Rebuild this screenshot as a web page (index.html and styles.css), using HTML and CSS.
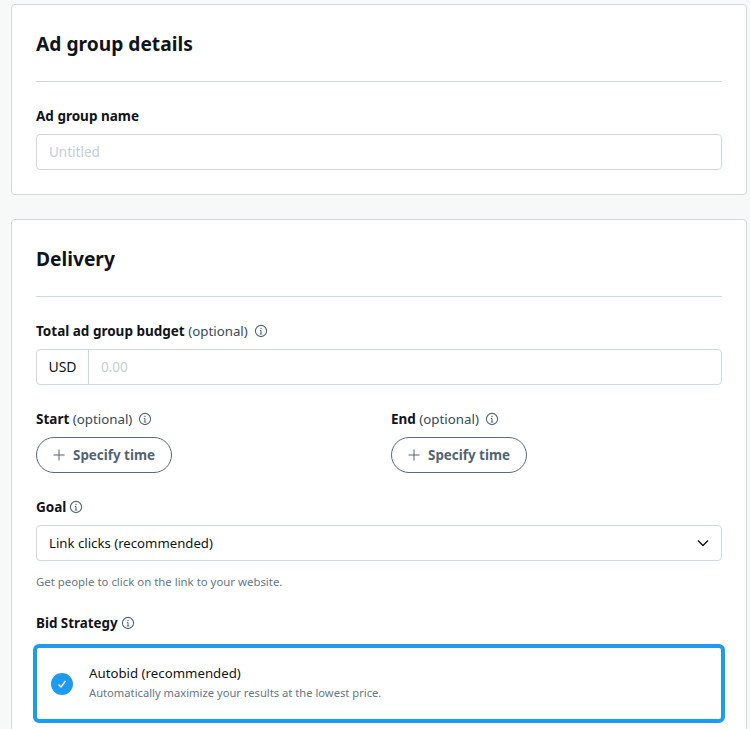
FILE: index.html
```html
<!DOCTYPE html>
<html lang="en">
<head>
<meta charset="utf-8">
<title>Ad group</title>
<link rel="stylesheet" href="styles.css">
</head>
<body>
<main class="page">
  <section class="card card-details">
    <h2 class="card-title">Ad group details</h2>
    <div class="label label-name"><b>Ad group name</b></div>
    <div class="input"><span class="placeholder">Untitled</span></div>
  </section>
  <section class="card card-delivery">
    <h2 class="card-title">Delivery</h2>
    <div class="label label-budget"><span><b>Total ad group budget</b> (optional)</span>
      <svg class="info info-wide" viewBox="0 0 14 14"><use href="#i"/></svg>
    </div>
    <div class="input input-group"><span class="addon">USD</span><span class="placeholder group-value">0.00</span></div>
    <div class="dates">
      <div class="date">
        <div class="label"><span><b>Start</b> (optional)</span>
          <svg class="info info-wide" viewBox="0 0 14 14"><use href="#i"/></svg>
        </div>
        <button class="pill" type="button"><svg class="plus" viewBox="0 0 12 12"><path d="M6 .5v11M.5 6h11"/></svg><span>Specify time</span></button>
      </div>
      <div class="date">
        <div class="label"><span><b>End</b> (optional)</span>
          <svg class="info info-wide" viewBox="0 0 14 14"><use href="#i"/></svg>
        </div>
        <button class="pill" type="button"><svg class="plus" viewBox="0 0 12 12"><path d="M6 .5v11M.5 6h11"/></svg><span>Specify time</span></button>
      </div>
    </div>
    <div class="label label-goal"><b>Goal</b>
      <svg class="info" viewBox="0 0 14 14"><use href="#i"/></svg>
    </div>
    <div class="input select"><span class="select-value">Link clicks (recommended)</span>
      <svg class="chevron" viewBox="0 0 12 8"><path d="M1 1.5l5 5 5-5"/></svg>
    </div>
    <p class="help">Get people to click on the link to your website.</p>
    <div class="label label-bid"><b>Bid Strategy</b>
      <svg class="info" viewBox="0 0 14 14"><use href="#i"/></svg>
    </div>
    <div class="option">
      <span class="check"><svg viewBox="0 0 12 12"><path d="M2.5 6.5l2.5 2.5 4.5-6"/></svg></span>
      <div class="option-text">
        <div class="option-title">Autobid (recommended)</div>
        <div class="option-sub">Automatically maximize your results at the lowest price.</div>
      </div>
    </div>
  </section>
</main>
<svg class="defs" width="0" height="0"><defs><g id="i" fill="none" stroke="#536471"><circle cx="7" cy="7" r="5.6" stroke-width="1.1"/><path d="M7 6.3v3.6M5.9 6.4H7M5.8 10h2.4" stroke-width="1"/><path d="M7 3.8v1.2" stroke-width="1.2"/></g></defs></svg>
</body>
</html>
```
FILE: styles.css
```css
* { box-sizing: border-box; }
html, body { margin: 0; height: 729px; overflow: hidden; }
body {
  background: #f7f9f9;
  color: #0f1419;
  font-family: "Noto Sans", "Open Sans", sans-serif;
  font-size: 14px;
}
.page { padding: 4px 3px 0 11px; display: flex; flex-direction: column; gap: 24px; }
.card {
  background: #fff;
  border: 1px solid #cfd9de;
  border-radius: 4px;
  padding: 0 24px;
}
.card-details { height: 191px; }
.card-delivery { height: 600px; }
.card-title {
  margin: 0;
  height: 77px;
  padding-top: 24px;
  font-size: 19.2px;
  line-height: 30px;
  font-weight: 700;
  border-bottom: 1px solid #cfd9de;
}
.label {
  display: flex;
  align-items: center;
  height: 20px;
  font-size: 13.3px;
  line-height: 20px;
  color: #394956;
}
.label b { color: #0f1419; font-weight: 700; font-size: 13.5px; }
.label-name, .label-budget { margin-top: 24px; margin-bottom: 8px; }
.input {
  height: 36px;
  border: 1px solid #cfd9de;
  border-radius: 4px;
  padding: 0 12px 1px;
  display: flex;
  align-items: center;
  background: #fff;
  font-size: 13.5px;
}
.placeholder { color: #c3ced6; }
.input-group { padding: 0; }
.addon { width: 52px; height: 100%; border-right: 1px solid #cfd9de; display: flex; align-items: center; justify-content: center; color: #0f1419; font-size: 14px; padding-bottom: 1px; }
.group-value { padding: 0 0 1px 12px; }
.dates { display: grid; grid-template-columns: 355px 1fr; margin-top: 24px; }
.date .label { margin-bottom: 8px; }
.pill {
  height: 36px;
  width: 136px;
  border: 1px solid #5b6b78;
  border-radius: 18px;
  background: #fff;
  color: #536471;
  font: 700 13.4px "Noto Sans", "Open Sans", sans-serif;
  display: flex;
  align-items: center;
  justify-content: center;
  gap: 8px;
  padding: 0;
}
.plus { width: 12px; height: 12px; fill: none; stroke: #536471; stroke-width: 1; }
.info { width: 14px; height: 14px; margin-left: 3px; flex: none; }
.info-wide { margin-left: 6px; }
.label-goal { margin-top: 24px; margin-bottom: 8px; }
.select { justify-content: space-between; color: #0f1419; padding-bottom: 0; }
.select-value { font-size: 13.2px; padding-bottom: 1px; }
.chevron { width: 12px; height: 8px; fill: none; stroke: #0f1419; stroke-width: 1.4; }
.help { margin: 12px 0 0; font-size: 11.4px; line-height: 18px; color: #657786; }
.label-bid { margin-top: 22px; margin-bottom: 11px; }
.label-bid b { font-size: 13.4px; }
.option {
  margin: 0 -3px;
  height: 79px;
  border: 4px solid #1d9bf0;
  border-radius: 6px;
  display: flex;
  align-items: center;
  padding-left: 14px;
  gap: 16px;
  background: #fff;
}
.check { width: 22px; height: 22px; border-radius: 50%; background: #1d9bf0; display: flex; align-items: center; justify-content: center; flex: none; }
.check svg { width: 12px; height: 12px; fill: none; stroke: #fff; stroke-width: 1.3; }
.option-text { margin-top: -2px; }
.option-title { font-size: 13.25px; line-height: 19px; color: #0f1419; }
.option-sub { font-size: 11.2px; line-height: 19px; color: #657786; }
.defs { position: absolute; }
```
